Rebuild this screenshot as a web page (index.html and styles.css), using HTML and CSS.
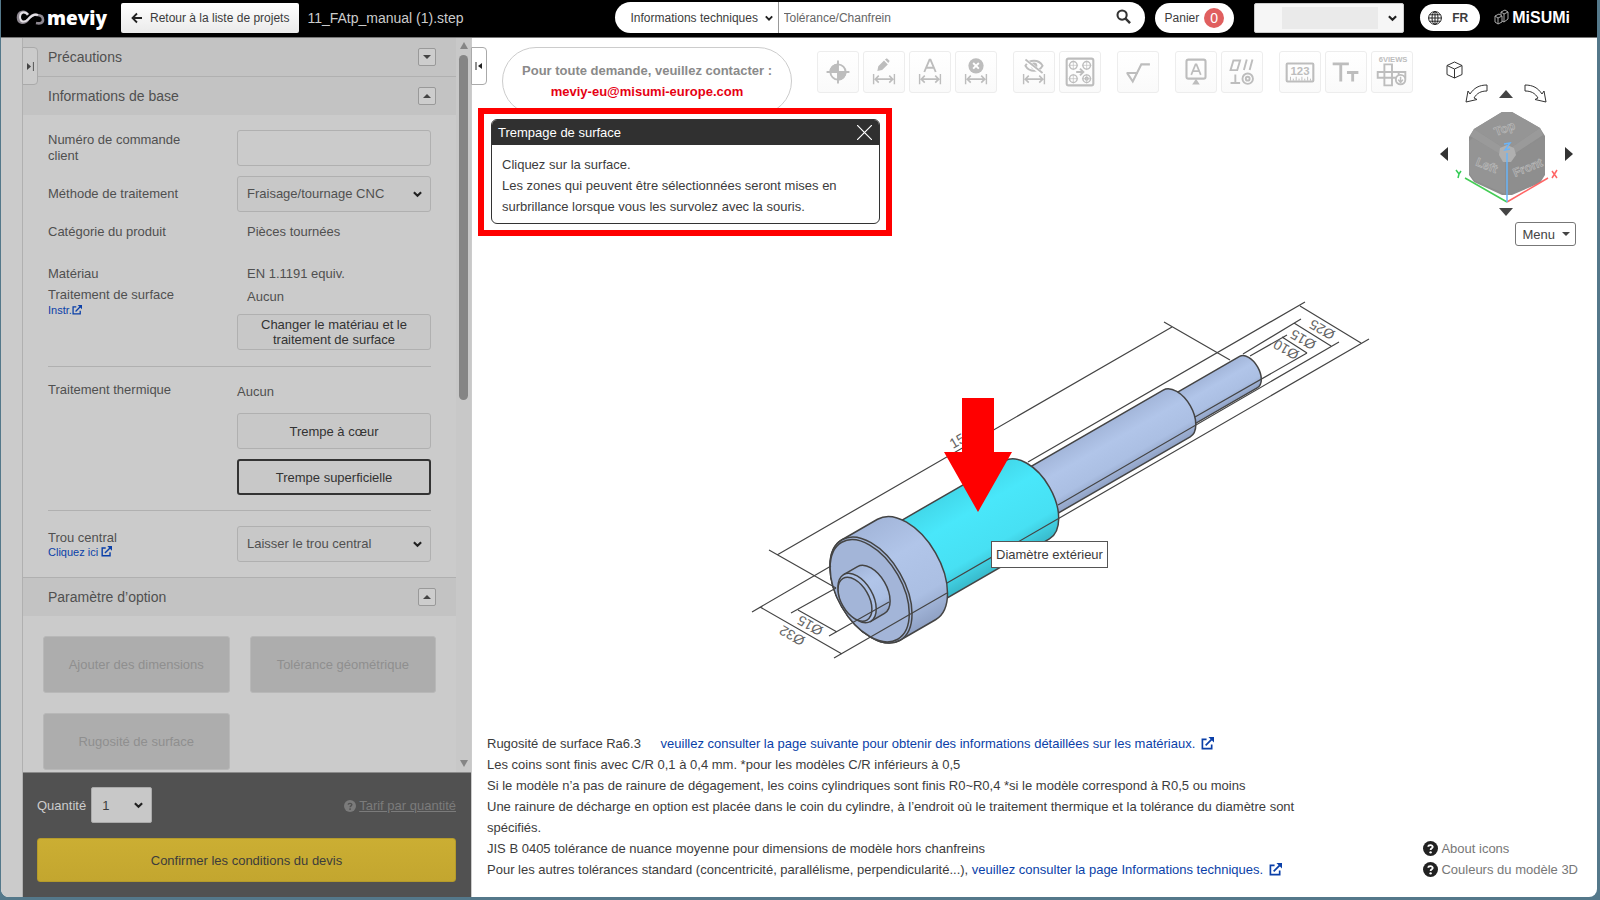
FILE: index.html
```
<!DOCTYPE html>
<html lang="fr">
<head>
    <meta charset="UTF-8">
    <meta name="viewport" content="width=device-width, initial-scale=1.0">
    <title>meviy - 11_FAtp_manual (1).step</title>
    <link rel="stylesheet" href="styles.css">
</head>
<body>
    <svg class="sprite" aria-hidden="true">
        <symbol id="ext" viewBox="0 0 14 14">
            <path d="M6 2.5H1.5v10h10V8" fill="none" stroke="currentColor" stroke-width="1.8"/>
            <path d="M5 9l6.5-6.5" fill="none" stroke="currentColor" stroke-width="1.8"/>
            <path d="M8 0h6v6z" fill="currentColor"/>
        </symbol>
        <symbol id="help" viewBox="0 0 14 14">
            <circle cx="7" cy="7" r="7" fill="currentColor"/>
            <path class="help-mark" d="M4.9 5.4C5 3.4 9.2 3.4 9.1 5.6 9 6.9 7.2 6.8 7.1 8.4" fill="none" stroke-width="1.7"/>
            <circle class="help-dot" cx="7.1" cy="10.6" r="1.1"/>
        </symbol>
        <symbol id="dim" viewBox="0 0 26 12">
            <path d="M1 0v12M25 0v12M3 6h20M7 2L3 6l4 4M19 2l4 4-4 4" fill="none" stroke="currentColor" stroke-width="1.8"/>
        </symbol>
    </svg>

    <div class="app">
        <header class="topbar">
            <a class="logo" href="#">
                <svg width="29" height="16" viewBox="0 0 29 16" fill="none">
                    <path d="M12 5C9 0 2 1 2 7.500s7 6.500 10 2c3-3.500 5-5.500 9-4.500 4 0 6 2 6 5s-3 4-7 3" stroke="#8d8790" stroke-width="2.600"/>
                    <path d="M12 4.500C9 1 4 2 4 7s4 6 8 2.500c3-3.500 6-6 10-4.500" stroke="#e4e0e5" stroke-width="2"/>
                </svg>
                <span>meviy</span>
            </a>
            <button class="back" type="button">
                <svg width="12" height="12" viewBox="0 0 12 12"><path d="M11 6H2M6 1.5L1.5 6 6 10.5" fill="none" stroke="#222" stroke-width="1.8"/></svg>
                Retour à la liste de projets
            </button>
            <span class="filename">11_FAtp_manual (1).step</span>

            <div class="search">
                <select class="search-type" aria-label="Type de recherche"><option>Informations techniques</option></select>
                <input type="text" placeholder="Tolérance/Chanfrein" aria-label="Recherche">
                <button type="button" aria-label="Rechercher">
                    <svg width="15" height="15" viewBox="0 0 16 16"><circle cx="6.5" cy="6.5" r="4.9" fill="none" stroke="#333" stroke-width="2.2"/><path d="M10 10l5 5" stroke="#333" stroke-width="2.6"/></svg>
                </button>
            </div>
            <button class="cart" type="button">Panier <span class="badge">0</span></button>
            <div class="account">
                <select aria-label="Compte"><option></option></select>
                <span class="account-mask"></span>
            </div>
            <button class="lang" type="button">
                <svg width="14" height="14" viewBox="0 0 14 14" fill="none" stroke="#222"><circle cx="7" cy="7" r="6.4"/><ellipse cx="7" cy="7" rx="3" ry="6.4"/><path d="M7 .6v12.8M.6 7h12.8M1.6 3.8h10.8M1.6 10.2h10.8"/></svg>
                FR
            </button>
            <a class="misumi" href="#">
                <svg width="15" height="17" viewBox="0 0 15 17" fill="none" stroke="#aaa"><path d="M1 7l4-2 3 2v6l-4 2-3-2zM1 7l3 2 4-2M4 9v6M7 3l4-2 3 2v7l-4 3-2-1M7 3l3 2 4-2M10 5v8M7 3v3"/></svg>
                <span>MiSUMi</span>
            </a>
        </header>

        <div class="workspace">
            <aside class="sidebar">
                <button class="tab tab-left" type="button" aria-label="Ouvrir le panneau">
                    <svg width="7" height="9" viewBox="0 0 7 9"><path d="M0 1l4 3.500-4 3.500z" fill="#444"/><path d="M6.400 0v9" stroke="#555"/></svg>
                </button>
                <div class="panel">
                    <div class="panel-scroll">
                        <div class="panel-body">
                            <h2 class="section-title">Précautions <button type="button" aria-label="Déplier"><i class="caret down"></i></button></h2>
                            <h2 class="section-title">Informations de base <button type="button" aria-label="Replier"><i class="caret up"></i></button></h2>

                            <div class="form">
                                <div class="row center">
                                    <label for="order-no">Numéro de commande client</label>
                                    <input id="order-no" class="field" type="text">
                                </div>
                                <div class="row center">
                                    <label for="method">Méthode de traitement</label>
                                    <select id="method" class="field"><option>Fraisage/tournage CNC</option></select>
                                </div>
                                <div class="row category">
                                    <span>Catégorie du produit</span>
                                    <span class="value">Pièces tournées</span>
                                </div>
                                <div class="row material">
                                    <div class="material-names">
                                        <p>Matériau</p>
                                        <p>Traitement de surface</p>
                                        <a href="#">Instr.<svg width="10" height="10"><use href="#ext"/></svg></a>
                                    </div>
                                    <div>
                                        <p class="value">EN 1.1191 equiv.</p>
                                        <p class="value">Aucun</p>
                                        <button class="field" type="button">Changer le matériau et le traitement de surface</button>
                                    </div>
                                </div>
                                <hr>
                                <div class="row heat">
                                    <span>Traitement thermique</span>
                                    <div class="heat-options">
                                        <p>Aucun</p>
                                        <button class="field" type="button">Trempe à cœur</button>
                                        <button class="field active" type="button">Trempe superficielle</button>
                                    </div>
                                </div>
                                <hr>
                                <div class="row center hole">
                                    <div class="stack">
                                        <label for="hole">Trou central</label>
                                        <a href="#">Cliquez ici <svg width="11" height="11"><use href="#ext"/></svg></a>
                                    </div>
                                    <select id="hole" class="field"><option>Laisser le trou central</option></select>
                                </div>
                            </div>

                            <h2 class="section-title ruled">Paramètre d’option <button type="button" aria-label="Replier"><i class="caret up"></i></button></h2>
                            <div class="options">
                                <button type="button" disabled>Ajouter des dimensions</button>
                                <button type="button" disabled>Tolérance géométrique</button>
                                <button type="button" disabled>Rugosité de surface</button>
                            </div>
                        </div>
                        <div class="scrollbar">
                            <i class="scroll-up"></i>
                            <i class="thumb"></i>
                            <i class="scroll-down"></i>
                        </div>
                    </div>
                    <div class="quote">
                        <div class="quote-row">
                            <label for="qty">Quantité</label>
                            <select id="qty"><option>1</option></select>
                            <a href="#"><svg width="12" height="12"><use href="#help"/></svg> <span>Tarif par quantité</span></a>
                        </div>
                        <button class="confirm" type="button">Confirmer les conditions du devis</button>
                    </div>
                </div>
            </aside>

            <main class="viewer">
                <svg class="model" width="640" height="380" viewBox="740 290 640 380">
                    <defs>
                        <linearGradient id="steel" x1="0" y1="0" x2="0" y2="1">
                            <stop offset="0" stop-color="#a3b6da"/><stop offset=".35" stop-color="#b1c5e9"/><stop offset=".75" stop-color="#abbfe3"/><stop offset="1" stop-color="#8fa1c4"/>
                        </linearGradient>
                        <linearGradient id="cyan" x1="0" y1="0" x2="0" y2="1">
                            <stop offset="0" stop-color="#42d8ea"/><stop offset=".3" stop-color="#49e7fa"/><stop offset=".75" stop-color="#47e0f3"/><stop offset="1" stop-color="#38b9ca"/>
                        </linearGradient>
                    </defs>
                    <!-- shaft, drawn along its own axis -->
                    <g transform="translate(871 590) rotate(-30)" stroke="#444" stroke-width="1.5">
                        <path d="M350-18H436A10.400 18 0 0 1 436 18H350z" fill="url(#steel)"/>
                        <path d="M175-27H353A15.600 27 0 0 1 353 27H175z" fill="url(#steel)"/>
                        <path d="M40-45H180A26 45 0 0 1 180 45H40z" fill="url(#cyan)"/>
                        <path d="M0-58H41A33.500 58 0 0 1 41 58H0A33.500 58 0 0 1 0-58z" fill="url(#steel)"/>
                        <ellipse cx="0" cy="0" rx="33.500" ry="58" fill="#a3b5d8"/>
                        <ellipse cx="-1.500" cy="0" rx="32.300" ry="56" fill="#a3b5d8"/>
                        <path d="M-16-27H0A15.600 27 0 0 1 0 27H-16z" fill="url(#steel)"/>
                        <ellipse cx="-16" cy="0" rx="15.600" ry="27" fill="#adc1e6"/>
                        <ellipse cx="-18.500" cy="0" rx="13.800" ry="24" fill="#a3b5d8"/>
                    </g>
                    <g class="dims">
                        <path d="M777 555L1172 327M769 550L836 588M1164 322L1230 360"/>
                        <path d="M1028 462L1305 302M947 583L1369 339M1300 306L1361 343"/>
                        <path d="M1243 354L1301 319M1058 505L1339 342M1294 323L1331 346"/>
                        <path d="M1250 356L1287 335M1195 417L1307 353M1282 337L1307 353"/>
                        <path d="M752 612L831 566M834 658L947 593M760 607L842 654"/>
                        <path d="M791 613L836 588M829 636L889 602M798 610L837 632"/>
                    </g>
                    <g class="dim-text">
                        <text transform="translate(953 449) rotate(-30)">155</text>
                        <text transform="translate(1336 332) rotate(210)">Ø25</text>
                        <text transform="translate(1317 342) rotate(210)">Ø15</text>
                        <text transform="translate(1300 352) rotate(210)">Ø10</text>
                        <text transform="translate(824 628) rotate(210)">Ø15</text>
                        <text transform="translate(806 638) rotate(210)">Ø32</text>
                    </g>
                    <path d="M962 398H994V452H1012L978 512L944 452H962z" fill="#f00"/>
                </svg>
                <div class="hover-label">Diamètre extérieur</div>

                <div class="viewer-top">
                    <button class="tab" type="button" aria-label="Fermer le panneau">
                        <svg width="8" height="8" viewBox="0 0 8 8"><path d="M7 1L3 4l4 3z" fill="#222"/><path d="M1 0v8" stroke="#222"/></svg>
                    </button>
                    <div class="contact">
                        <p>Pour toute demande, veuillez contacter :</p>
                        <a href="mailto:meviy-eu@misumi-europe.com">meviy-eu@misumi-europe.com</a>
                    </div>
                    <div class="toolbar">
                        <div class="group">
                            <button type="button" aria-label="Origine"><svg viewBox="0 0 42 42"><circle cx="21" cy="21" r="8" fill="none" stroke="currentColor" stroke-width="2"/><path d="M21 21V12A9 9 0 0 0 12 21zM21 21v9a9 9 0 0 0 9-9z" fill="currentColor"/><path d="M21 9v24M9 21h24" stroke="currentColor" stroke-width="2"/></svg></button>
                            <button type="button" aria-label="Modifier la cote"><svg viewBox="0 0 42 42"><use href="#dim" x="9" y="23" width="24" height="11"/><path d="M14 20l1-5 6-6 4 4-6 6zM22 8l2-1.500 3 3-1.500 2z" fill="currentColor"/></svg></button>
                            <button type="button" aria-label="Cote texte"><svg viewBox="0 0 42 42"><use href="#dim" x="9" y="23" width="24" height="11"/><path d="M15 21l5.500-13h1L27 21M17 16.500h8" fill="none" stroke="currentColor" stroke-width="2"/></svg></button>
                            <button type="button" aria-label="Supprimer la cote"><svg viewBox="0 0 42 42"><use href="#dim" x="9" y="23" width="24" height="11"/><circle cx="21" cy="14.500" r="8" fill="currentColor"/><path d="M18 11.500l6 6M24 11.500l-6 6" stroke="#fff" stroke-width="2"/></svg></button>
                        </div>
                        <div class="group">
                            <button type="button" aria-label="Masquer la cote"><svg viewBox="0 0 42 42"><use href="#dim" x="9" y="23" width="24" height="11"/><path d="M12 14.500c4-7 14-7 18 0-4 7-14 7-18 0z" fill="none" stroke="currentColor" stroke-width="2"/><circle cx="21" cy="14.500" r="3.500" fill="currentColor"/><path d="M11 8l19 15" stroke="#fff" stroke-width="4"/><path d="M12 8l18 14" stroke="currentColor" stroke-width="2"/></svg></button>
                            <button type="button" aria-label="Trous groupés"><svg viewBox="0 0 42 42" fill="none" stroke="currentColor" stroke-width="1.500"><rect x="7" y="7" width="28" height="28" rx="2" stroke-width="2.200"/><circle cx="14" cy="14" r="4"/><circle cx="28" cy="14" r="4"/><circle cx="14" cy="28" r="4"/><circle cx="28" cy="28" r="4"/><circle cx="28" cy="28" r="1.500"/><path d="M9 14h10M14 9v10M23 14h10M28 9v10M9 28h10M14 23v10M23 28h10M28 23v10" stroke-width=".7"/><path d="M17 21h7M21 17.500l3.500 3.500-3.500 3.500" stroke-width="2"/></svg></button>
                        </div>
                        <div class="group">
                            <button type="button" aria-label="Rugosité"><svg viewBox="0 0 42 42"><path d="M9 22h12M9.500 22l6 9 9-18h9" fill="none" stroke="currentColor" stroke-width="2.200"/></svg></button>
                        </div>
                        <div class="group">
                            <button type="button" aria-label="Référence"><svg viewBox="0 0 42 42"><rect x="11" y="8" width="20" height="20" rx="2" fill="none" stroke="currentColor" stroke-width="2.200"/><path d="M16 24l4.500-11h1L26 24M18 20h6" fill="none" stroke="currentColor" stroke-width="1.800"/><path d="M21 28l4 6h-8z" fill="currentColor"/></svg></button>
                            <button type="button" aria-label="Tolérance géométrique"><svg viewBox="0 0 42 42" fill="none" stroke="currentColor" stroke-width="2"><path d="M9 19l3-10h7l-3 10zM23 19l3-11M29 19l3-11M9 32.500h10M14 32.500v-9"/><circle cx="27" cy="28" r="5.500"/><circle cx="27" cy="28" r="2"/></svg></button>
                        </div>
                        <div class="group">
                            <button type="button" aria-label="Mesures"><svg viewBox="0 0 42 42"><rect x="7" y="12" width="28" height="19" rx="1" fill="none" stroke="currentColor" stroke-width="2.200"/><text class="digits" x="11" y="24">123</text><path d="M11 30v-4M14 30v-2M17 30v-4M20 30v-2M23 30v-4M26 30v-2M29 30v-4M32 30v-2" stroke="currentColor"/></svg></button>
                            <button type="button" aria-label="Texte"><svg viewBox="0 0 42 42"><path d="M7 12.500h17M15.500 12v19M22 21.500h12M28 21v10" fill="none" stroke="currentColor" stroke-width="3"/></svg></button>
                            <button type="button" aria-label="Six vues"><svg viewBox="0 0 42 42"><text class="views" x="7" y="11">6VIEWS</text><path d="M13 13h8v8h14v6H21v8h-8v-8H6v-6h7zM13 21h8v6h-8zM28 21v6" fill="none" stroke="currentColor" stroke-width="2"/><circle cx="30" cy="29" r="5" fill="#fff" stroke="currentColor" stroke-width="2"/><path d="M30 26v5M27.500 29l2.500 3 2.500-3" fill="none" stroke="currentColor" stroke-width="1.600"/></svg></button>
                        </div>
                    </div>

                    <div class="view-nav">
                        <button class="home" type="button" aria-label="Vue isométrique"><svg width="17" height="18" viewBox="0 0 17 18" fill="none" stroke="#333"><path d="M8.500 1l7.500 3.500v9L8.500 17 1 13.500v-9zM1 4.500L8.500 8 16 4.500M8.500 8v9"/></svg></button>
                        <div class="nav-row spin">
                            <button type="button" aria-label="Tourner à gauche"><svg width="23" height="19" viewBox="0 0 23 19" fill="none" stroke="#333"><path d="M22 1v6C16 7 12 9 9 14l3 1.500L1 18 3 7l2 3C9 4 14 1 22 1z"/></svg></button>
                            <button type="button" aria-label="Haut"><svg width="14" height="8" viewBox="0 0 14 8"><path d="M0 8l7-8 7 8z" fill="#444"/></svg></button>
                            <button type="button" aria-label="Tourner à droite"><svg width="23" height="19" viewBox="0 0 23 19" fill="none" stroke="#333"><path d="M1 1v6c6 0 10 2 13 7l-3 1.500L22 18 20 7l-2 3C14 4 9 1 1 1z"/></svg></button>
                        </div>
                        <div class="nav-row">
                            <button type="button" aria-label="Gauche"><svg width="8" height="14" viewBox="0 0 8 14"><path d="M8 0v14L0 7z" fill="#333"/></svg></button>
                            <svg class="cube" width="107" height="101" viewBox="1453 104 107 101">
                                <path d="M1502 113h10l28 16 5 8v39l-5 8-28 12h-10l-28-13-5-7v-38l5-8z" fill="#8d8d8d"/>
                                <path d="M1502 113h10l28 16-28 19h-10l-28-18z" fill="#959595"/>
                                <path d="M1473 139l28 16 4 8v32l-31-14-5-7v-32z" fill="#949494"/>
                                <path d="M1541 139l-27 16-4 8v32l31-14 4-7v-32z" fill="#8e8e8e"/>
                                <path d="M1474 130l28 18 5 4 5-4 28-19 3 7-29 19-4 6h-6l-4-6-30-18z" fill="#9a9a9a"/>
                                <path d="M1500 149l7-3 7 3 2 7-5 7h-8l-4-7z" fill="#b0b0b0"/>
                                <g class="cube-text">
                                    <text transform="translate(1496 137) rotate(-20)">Top</text>
                                    <text transform="translate(1475 166) rotate(22)">Left</text>
                                    <text transform="translate(1515 178) rotate(-22)">Front</text>
                                </g>
                                <path d="M1507 203l-42-24" stroke="#4c5" stroke-width="1.500"/>
                                <path d="M1507 203l41-24" stroke="#f66" stroke-width="1.500"/>
                                <path d="M1507 203v-49" stroke="#6ab4f8" stroke-width="1.500"/>
                                <path d="M1504 145l6-1-5 7 5-1" fill="none" stroke="#6ab4f8" stroke-width="1.500"/>
                                <path d="M1456 171l3 4 2-3M1459 175l-1 4" fill="none" stroke="#3c5" stroke-width="1.500"/>
                                <path d="M1552 172l5 7M1557 171l-5 8" stroke="#f66" stroke-width="1.500"/>
                            </svg>
                            <button type="button" aria-label="Droite"><svg width="8" height="14" viewBox="0 0 8 14"><path d="M0 0v14l8-7z" fill="#333"/></svg></button>
                        </div>
                        <button class="nav-down" type="button" aria-label="Bas"><svg width="14" height="8" viewBox="0 0 14 8"><path d="M0 0l7 8 7-8z" fill="#444"/></svg></button>
                        <button class="menu" type="button">Menu <i class="caret down"></i></button>
                    </div>
                </div>

                <div class="guide">
                    <div class="dialog" role="dialog" aria-label="Trempage de surface">
                        <div class="dialog-head">
                            Trempage de surface
                            <button type="button" aria-label="Fermer"><svg width="15" height="15" viewBox="0 0 15 15"><path d="M0 0l15 15M15 0L0 15" stroke="#fff" stroke-width="1.200"/></svg></button>
                        </div>
                        <div class="dialog-body">
                            <p>Cliquez sur la surface.</p>
                            <p>Les zones qui peuvent être sélectionnées seront mises en surbrillance lorsque vous les survolez avec la souris.</p>
                        </div>
                    </div>
                </div>

                <div class="viewer-bottom">
                    <div class="notes">
                        <p>Rugosité de surface Ra6.3 <a class="spaced" href="#">veuillez consulter la page suivante pour obtenir des informations détaillées sur les matériaux. <svg width="13" height="13"><use href="#ext"/></svg></a></p>
                        <p>Les coins sont finis avec C/R 0,1 à 0,4 mm. *pour les modèles C/R inférieurs à 0,5</p>
                        <p>Si le modèle n’a pas de rainure de dégagement, les coins cylindriques sont finis R0~R0,4 *si le modèle correspond à R0,5 ou moins</p>
                        <p>Une rainure de décharge en option est placée dans le coin du cylindre, à l’endroit où le traitement thermique et la tolérance du diamètre sont spécifiés.</p>
                        <p>JIS B 0405 tolérance de nuance moyenne pour dimensions de modèle hors chanfreins</p>
                        <p>Pour les autres tolérances standard (concentricité, parallélisme, perpendicularité...), <a href="#">veuillez consulter la page Informations techniques. <svg width="13" height="13"><use href="#ext"/></svg></a></p>
                    </div>
                    <div class="legend">
                        <a href="#"><svg width="15" height="15"><use href="#help"/></svg>About icons</a>
                        <a href="#"><svg width="15" height="15"><use href="#help"/></svg>Couleurs du modèle 3D</a>
                    </div>
                </div>
            </main>
        </div>
    </div>
</body>
</html>
```
FILE: styles.css
```
:root {
    --panel: #cbcbcb;
    --panel-head: #c3c3c3;
    --line: #b0b0b0;
    --link: #0a3fa8;
    --mark: #515151;
    --chevron: url("data:image/svg+xml,%3csvg xmlns='http://www.w3.org/2000/svg' viewBox='0 0 10 8'%3e%3cpath fill='none' stroke='%23222' stroke-width='2.4' d='M1 2l4 4 4-4'/%3e%3c/svg%3e");
}

* { box-sizing: border-box; }

body {
    margin: 0;
    height: 100vh;
    padding: 0 3px 3px 1px;
    background: #54788a;
    font-family: "Liberation Sans", Arial, sans-serif;
    font-size: 13px;
    color: #3c3c3c;
    overflow: hidden;
}

p, h2 { margin: 0; }
a { color: var(--link); text-decoration: none; }
button, input, select { font: inherit; color: inherit; margin: 0; }
button { cursor: pointer; }
.sprite { position: absolute; width: 0; height: 0; }

select {
    appearance: none;
    background-image: var(--chevron);
    background-repeat: no-repeat;
    background-position: right 8px center;
    background-size: 9px 8px;
}

.app {
    display: flex;
    flex-direction: column;
    height: 100%;
    background: #fff;
    border-radius: 0 0 8px 8px;
    overflow: hidden;
}

/* top bar */
.topbar {
    display: flex;
    align-items: center;
    height: 38px;
    padding: 0 27px 2px 15px;
    background: #000;
    border-bottom: 1px solid #777;
    font-size: 12px;
    flex: none;
}
.logo { display: flex; align-items: center; gap: 2px; width: 105px; }
.logo span {
    font: 800 19px/32px "Open Sans", "Noto Sans", sans-serif;
    color: #fff;
}
.back {
    display: flex;
    align-items: center;
    gap: 7px;
    height: 30px;
    padding: 0 10px;
    border: 0;
    border-radius: 2px;
    background: linear-gradient(#fff, #eaeaea);
    white-space: nowrap;
}
.filename { margin-left: 8px; font-size: 14px; color: #ccc; }
.search {
    display: flex;
    width: 530px;
    height: 31px;
    margin-left: auto;
    border-radius: 16px;
    background: #fff;
    overflow: hidden;
}
.search-type {
    width: 164px;
    padding: 0 20px 0 16px;
    border: 0;
    border-right: 1px solid #999;
    background-color: transparent;
    background-position: right 5px center;
    background-size: 8px 8px;
}
.search input { flex: 1; min-width: 0; padding: 0 5px; border: 0; outline: 0; background: none; }
.search input::placeholder { color: #666; opacity: 1; }
.search button { width: 42px; padding: 0; border: 0; background: none; text-align: center; }
.cart {
    display: flex;
    align-items: center;
    gap: 5px;
    height: 30px;
    margin-left: 10px;
    padding: 0 10px;
    border: 0;
    border-radius: 15px;
    background: #fff;
}
.badge {
    width: 20px;
    border-radius: 50%;
    background: #e05f5f;
    color: #fff;
    line-height: 20px;
    font-size: 14px;
}
.account { position: relative; margin-left: 20px; }
.account select {
    display: block;
    width: 150px;
    height: 30px;
    border: 1px solid #ccc;
    border-radius: 2px;
    background-color: #f6f6f6;
    background-position: right 6px center;
}
.account-mask {
    position: absolute;
    inset: 4px 26px 4px 28px;
    background: #eaeaea;
}
.lang {
    display: flex;
    align-items: center;
    gap: 10px;
    height: 27px;
    margin-left: 16px;
    padding: 0 12px 0 8px;
    border: 0;
    border-radius: 14px;
    background: #fff;
    font-weight: bold;
}
.misumi { display: flex; align-items: center; gap: 3px; margin-left: 14px; color: #fff; font-size: 16px; font-weight: bold; }

.workspace { display: flex; flex: 1; min-height: 0; }

/* left panel */
.sidebar {
    position: relative;
    width: 470px;
    flex: none;
    padding-left: 21px;
    background: var(--panel);
}
.tab {
    display: flex;
    align-items: center;
    justify-content: center;
    width: 16px;
    height: 38px;
    padding: 0;
    border: 1px solid #aaa;
    border-radius: 0 4px 4px 0;
    background: #fff;
}
.tab-left { position: absolute; left: 21px; top: 9px; background: var(--panel); }
.panel { display: flex; flex-direction: column; height: 100%; border-left: 1px solid var(--line); }
.panel-scroll { display: flex; flex: 1; min-height: 0; }
.panel-body { flex: 1; overflow: hidden; color: #505050; }
.section-title {
    display: flex;
    align-items: center;
    justify-content: space-between;
    height: 38px;
    padding: 0 20px 0 25px;
    background: var(--panel-head);
    font-size: 14px;
    font-weight: normal;
}
.section-title + .section-title, .section-title.ruled { height: 39px; border-top: 1px solid var(--line); }
.section-title button {
    display: grid;
    place-items: center;
    width: 18px;
    height: 18px;
    padding: 0;
    border: 1px solid #999;
    border-radius: 2px;
    background: #cdcdcd;
}
.caret { border: 4px solid transparent; }
.caret.down { border-top-color: #444; border-bottom: 0; }
.caret.up { border-bottom-color: #444; border-top: 0; }

.form { padding: 15px 25px; }
.row {
    display: grid;
    grid-template-columns: 1fr 194px;
    column-gap: 40px;
    margin-bottom: 10px;
    line-height: 16px;
}
.row.center { align-items: center; }
.row.hole { margin-bottom: 0; }
.row > * { min-width: 0; }
.value { padding-left: 10px; }
.field {
    display: block;
    width: 194px;
    height: 36px;
    padding: 0 9px;
    border: 1px solid var(--line);
    border-radius: 3px;
    background-color: #c8c8c8;
}
input.field { background: var(--panel); }
button.field { padding: 0 20px; line-height: 15px; color: #333; }
.field.active { border: 2px solid #333; }
.form a { display: block; font-size: 11px; line-height: 14px; }
.form a svg { vertical-align: -1px; }
.category { margin: 12px 0 26px; }
.material { margin-bottom: 16px; }
.material-names p + p { margin-top: 5px; }
.material .value { margin-bottom: 7px; }
.material .field { margin-top: 9px; }
.form hr { margin: 0 0 15px; border: 0; border-top: 1px solid var(--line); }
.heat { margin-bottom: 15px; }
.heat-options { display: grid; gap: 10px; }
.heat-options p { padding: 2px 0 3px; }
.stack { line-height: 15px; }

.options {
    display: grid;
    grid-template-columns: 1fr 1fr;
    gap: 20px;
    padding: 20px 20px 4px;
}
.options button {
    height: 57px;
    border: 1px solid #b8b8b8;
    border-radius: 3px;
    background: #adadad;
    color: #8f8f8f;
}

.scrollbar {
    display: flex;
    flex-direction: column;
    align-items: center;
    width: 15px;
    padding: 4px 0 5px;
    background: #c8c8c8;
}
.thumb { width: 9px; height: 345px; margin-top: 6px; border-radius: 5px; background: #858585; }
.scroll-up { border: 4px solid transparent; border-top: 0; border-bottom: 7px solid #858585; }
.scroll-down { margin-top: auto; border: 4px solid transparent; border-bottom: 0; border-top: 7px solid #858585; }

.quote {
    padding: 14px 15px 15px 14px;
    border-top: 1px solid #8a8a8a;
    background: #515151;
}
.quote-row { display: flex; align-items: center; gap: 5px; margin-bottom: 15px; }
.quote-row label { color: #ccc; }
.quote-row select {
    width: 61px;
    height: 36px;
    padding: 0 10px;
    border: 1px solid #aaa;
    border-radius: 2px;
    background-color: #c8c8c8;
}
.quote-row a { margin-left: auto; color: #7b7b7b; }
.quote-row a span { text-decoration: underline; }
.quote-row svg { vertical-align: -2px; }
.help-mark { stroke: var(--mark); }
.help-dot { fill: var(--mark); }
.confirm {
    width: 100%;
    height: 44px;
    border: 1px solid #b59b2a;
    border-radius: 3px;
    background: linear-gradient(#cbae33, #c3a62f);
}

/* 3D viewer */
.viewer {
    position: relative;
    display: flex;
    flex-direction: column;
    flex: 1;
    min-width: 0;
    border-left: 1px solid #ccc;
}
.viewer-top { display: flex; align-items: flex-start; padding: 9px 21px 0 0; }
.viewer-top .tab { margin-left: -1px; }
.contact {
    width: 290px;
    height: 68px;
    margin-left: 15px;
    padding-top: 12px;
    border: 1px solid #ccc;
    border-radius: 34px;
    font-weight: bold;
    line-height: 21px;
    text-align: center;
    color: #8a8a8a;
}
.contact a { color: #e60012; }
.toolbar { display: flex; gap: 16px; margin: 4px 0 0 25px; }
.group { display: flex; gap: 4px; }
.group button {
    width: 42px;
    height: 42px;
    padding: 0;
    border: 1px solid #ededed;
    border-radius: 3px;
    background: linear-gradient(#fff, #fafafa);
    color: #bdbdbd;
}
.group svg { display: block; width: 40px; height: 40px; }
.digits { font: bold 12px "Liberation Sans", sans-serif; fill: currentColor; }
.views { font: bold 8px "Liberation Sans", sans-serif; fill: currentColor; }

.view-nav {
    display: flex;
    flex-direction: column;
    align-items: center;
    width: 140px;
    margin-left: auto;
    padding-top: 14px;
}
.view-nav button { display: block; padding: 0; border: 0; background: none; }
.view-nav svg { display: block; }
.view-nav .home { align-self: flex-start; margin: 0 0 5px 10px; }
.nav-row { display: flex; align-items: center; gap: 5px; }
.spin { gap: 11px; }
.view-nav .nav-down { margin: 4px 0 6px; }
.view-nav .menu {
    display: flex;
    align-items: center;
    gap: 7px;
    align-self: flex-end;
    height: 24px;
    padding: 0 5px 0 6px;
    border: 1px solid #777;
    border-radius: 3px;
    background: #fff;
    color: #444;
}
.cube-text { font: bold 12px "Liberation Sans", sans-serif; fill: #959595; stroke: #bbb; stroke-width: .6px; }

.model { position: absolute; left: 268px; top: 252px; }
.dims { fill: none; stroke: #444; stroke-width: 1.2px; }
.dim-text { font: 14px "Liberation Sans", sans-serif; fill: #666; }
.hover-label {
    position: absolute;
    left: 519px;
    top: 503px;
    padding: 0 4px;
    border: 1px solid #555;
    background: #fff;
    line-height: 25px;
}

/* highlighted help dialog */
.guide {
    position: absolute;
    left: 6px;
    top: 70px;
    width: 414px;
    padding: 5px 6px 6px 7px;
    border: 6px solid #f00;
    background: #fff;
}
.dialog { border: 1px solid #333; border-radius: 6px; overflow: hidden; }
.dialog-head {
    display: flex;
    align-items: center;
    justify-content: space-between;
    height: 25px;
    padding: 0 7px 0 6px;
    background: #303030;
    color: #fff;
}
.dialog-head button { padding: 0; border: 0; background: none; }
.dialog-head svg { display: block; }
.dialog-body { padding: 9px 30px 6px 10px; line-height: 21px; }

.viewer-bottom {
    display: flex;
    align-items: flex-end;
    justify-content: space-between;
    margin-top: auto;
    padding: 0 19px 17px 15px;
    line-height: 21px;
}
.notes { max-width: 830px; }
.notes svg { display: inline-block; margin-left: 2px; vertical-align: -2px; }
.spaced { margin-left: 16px; }
.legend { --mark: #fff; }
.legend a { display: flex; align-items: center; gap: 3px; color: #777; }
.legend svg { color: #222; }
```
